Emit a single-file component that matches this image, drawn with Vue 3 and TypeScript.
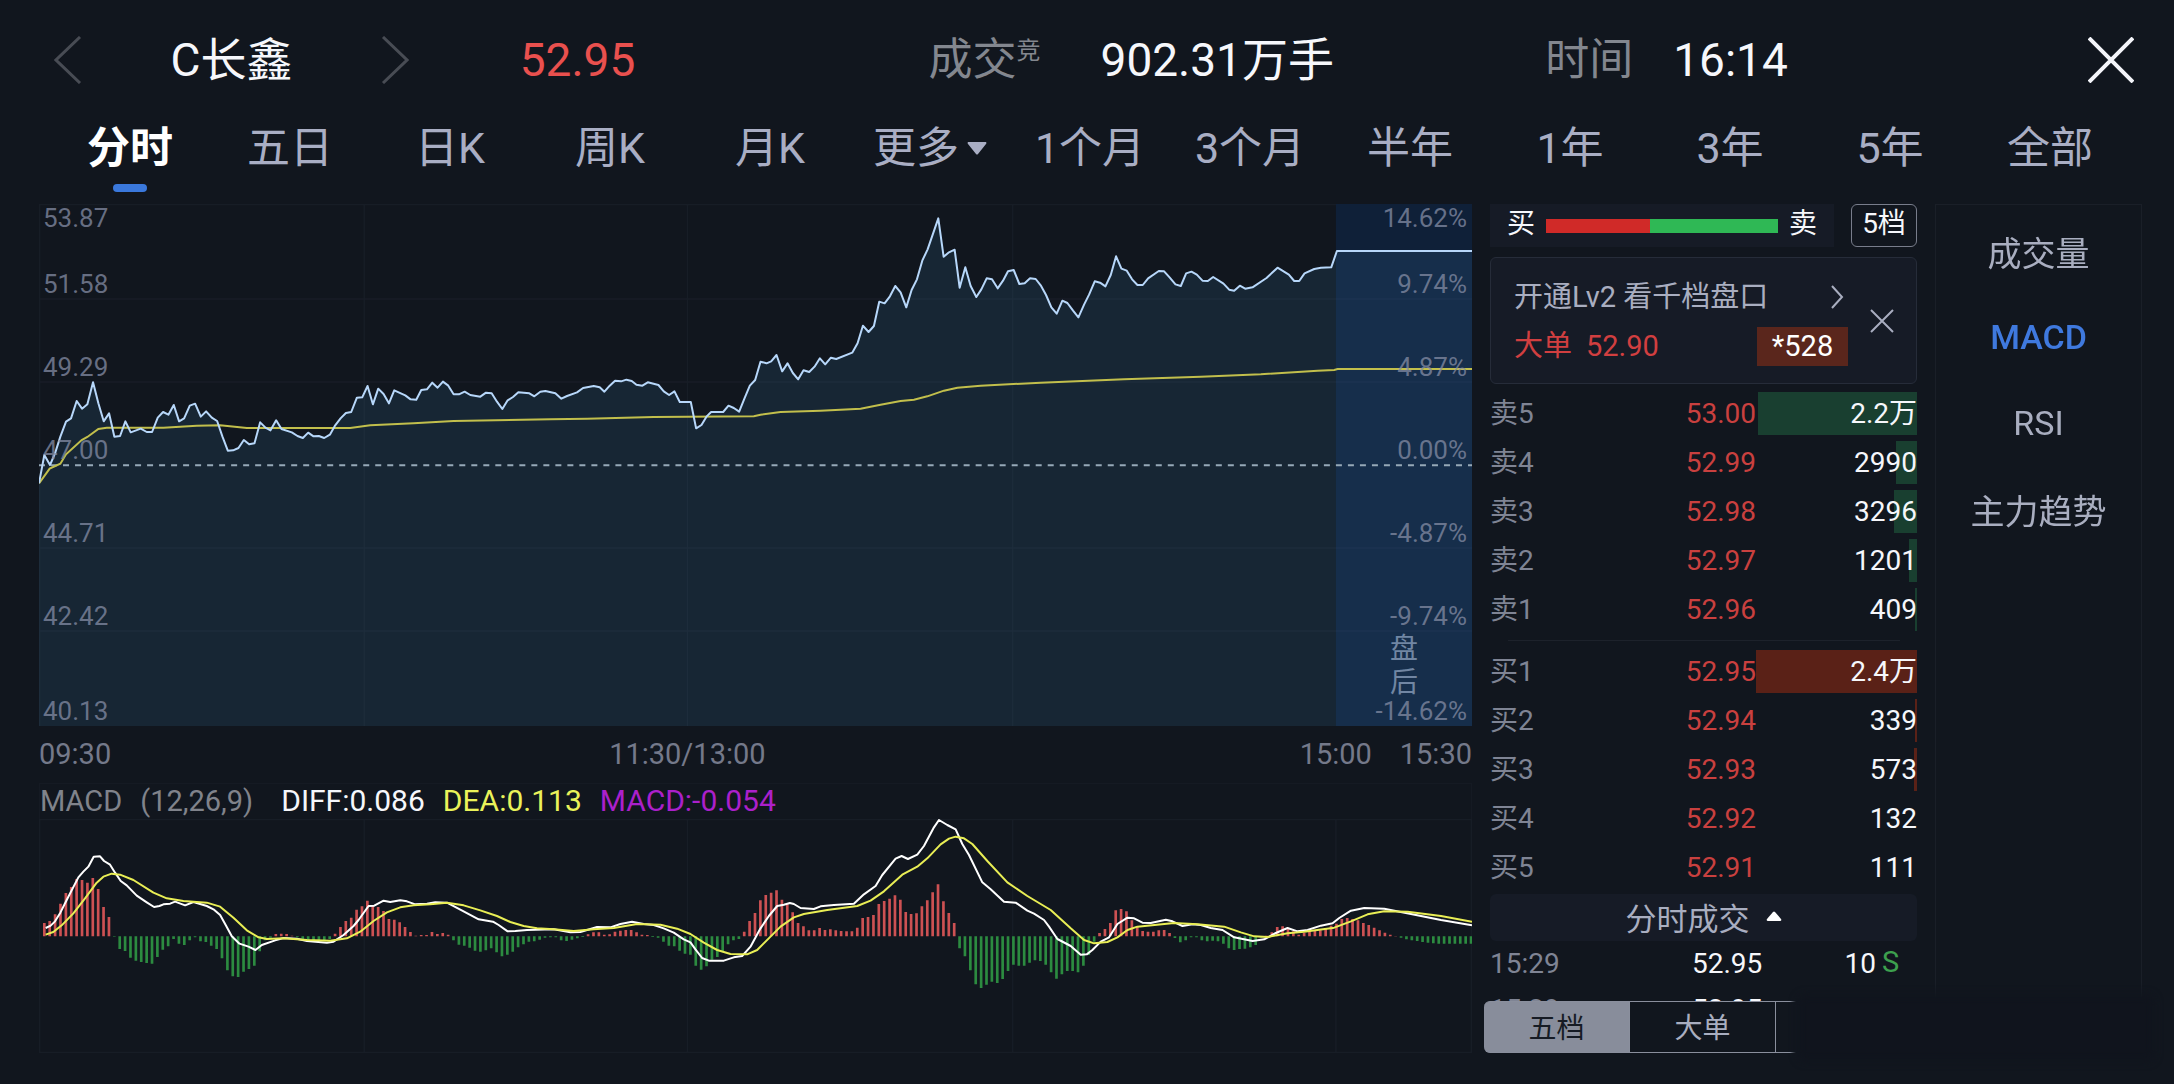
<script setup lang="ts">
import { computed, ref } from 'vue'

interface Level {
  name: string
  price: string
  volume: string
  depth: number
}

const periods = ['分时', '五日', '日K', '周K', '月K', '更多', '1个月', '3个月', '半年', '1年', '3年', '5年', '全部']
const activePeriod = ref('分时')

const indicators = ['成交量', 'MACD', 'RSI', '主力趋势']
const activeIndicator = ref('MACD')

const priceLabels = ['53.87', '51.58', '49.29', '47.00', '44.71', '42.42', '40.13']
const percentLabels = ['14.62%', '9.74%', '4.87%', '0.00%', '-4.87%', '-9.74%', '-14.62%']
const timeLabels = ['09:30', '11:30/13:00', '', '15:00', '15:30']

const asks: Level[] = [
  { name: '卖5', price: '53.00', volume: '2.2万', depth: 99 },
  { name: '卖4', price: '52.99', volume: '2990', depth: 13 },
  { name: '卖3', price: '52.98', volume: '3296', depth: 14 },
  { name: '卖2', price: '52.97', volume: '1201', depth: 5 },
  { name: '卖1', price: '52.96', volume: '409', depth: 1 },
]
const bids: Level[] = [
  { name: '买1', price: '52.95', volume: '2.4万', depth: 100 },
  { name: '买2', price: '52.94', volume: '339', depth: 1 },
  { name: '买3', price: '52.93', volume: '573', depth: 2 },
  { name: '买4', price: '52.92', volume: '132', depth: 0 },
  { name: '买5', price: '52.91', volume: '111', depth: 0 },
]
const trades = [
  { time: '15:29', price: '52.95', amount: '10', side: 'S' },
  { time: '15:29', price: '52.95', amount: '', side: '' },
]

// Both plots use a 4296-unit wide canvas; the vertical axis grows downwards.
const price =
  '0,838 16,753 33,783 48,748 64,698 81,653 96,643 113,591 129,614 145,601 162,535 178,598 194,652 210,628 226,698 243,696 259,652 275,685 305,674 323,684 339,684 356,641 372,624 388,632 404,603 420,652 435,643 452,605 468,599 485,638 501,622 518,641 534,651 550,698 566,740 582,739 598,732 614,708 630,721 646,718 663,655 679,671 694,679 711,649 727,675 758,685 775,696 791,702 807,686 823,697 839,696 855,702 872,692 888,664 904,643 920,627 936,624 953,581 969,580 985,546 1001,601 1017,554 1033,570 1049,598 1065,559 1098,574 1114,586 1131,587 1146,558 1163,556 1179,536 1195,551 1211,533 1227,545 1243,571 1259,571 1276,563 1293,573 1323,578 1340,566 1357,568 1373,593 1389,615 1405,589 1421,579 1437,565 1470,568 1485,577 1503,563 1518,561 1548,568 1566,584 1583,576 1613,565 1631,552 1663,546 1681,550 1695,563 1711,545 1727,530 1745,532 1761,527 1777,531 1791,542 1809,545 1825,535 1857,543 1873,562 1889,573 1905,562 1921,594 1954,594 1970,673 1986,663 2001,638 2015,624 2051,624 2067,605 2083,612 2099,623 2115,583 2131,545 2147,528 2163,473 2181,478 2195,472 2211,453 2228,502 2244,478 2260,507 2276,526 2292,499 2309,504 2325,488 2341,463 2357,481 2374,461 2390,465 2438,446 2454,418 2470,365 2487,384 2503,366 2519,293 2535,298 2551,277 2567,246 2583,265 2600,310 2616,258 2632,226 2648,170 2664,136 2696,43 2712,158 2728,145 2745,137 2760,251 2777,190 2793,246 2810,279 2825,256 2841,223 2857,226 2874,253 2890,230 2905,202 2922,198 2939,240 2955,238 2971,223 2988,225 3003,244 3019,273 3035,310 3051,329 3068,290 3083,297 3100,320 3116,340 3133,302 3148,272 3165,232 3181,236 3197,247 3213,213 3229,157 3245,194 3261,200 3277,226 3293,243 3309,243 3325,223 3357,201 3373,202 3390,221 3407,241 3423,246 3439,208 3455,203 3471,212 3488,230 3504,231 3520,219 3551,239 3568,257 3583,260 3600,245 3616,254 3638,250 3680,222 3713,191 3747,212 3763,231 3778,231 3794,208 3823,195 3843,191 3874,190 3891,141 4296,141'
const average =
  '0,838 32,794 64,779 81,751 128,708 145,699 178,675 203,671 373,671 473,665 543,664 623,672 933,672 993,664 1123,658 1243,651 1533,646 1643,644 1843,639 2143,637 2163,632 2223,624 2343,620 2463,614 2523,602 2583,591 2623,587 2663,577 2713,560 2753,551 2823,545 3003,536 3253,526 3483,518 3663,511 3833,500 3883,498 3893,495 4296,495'
const diff =
  '20,327 35,320 48,307 64,281 83,243 118,175 133,158 148,143 164,113 183,112 195,126 213,137 228,161 245,186 263,199 293,230 323,250 345,264 361,261 373,256 393,254 408,248 438,259 463,249 503,261 523,271 543,288 558,315 578,352 601,374 628,383 649,393 668,378 708,364 733,357 773,359 803,366 863,371 883,368 913,348 943,321 958,303 988,261 1005,260 1033,245 1053,249 1083,244 1103,247 1128,256 1163,254 1188,250 1223,251 1263,272 1318,301 1361,308 1378,318 1405,337 1428,336 1463,333 1543,331 1593,340 1623,339 1673,324 1713,325 1743,315 1778,308 1813,315 1843,318 1873,328 1903,341 1933,361 1953,370 1968,391 1988,417 2008,425 2053,425 2083,415 2108,411 2133,383 2163,328 2188,291 2213,261 2233,257 2251,252 2263,255 2283,267 2323,270 2343,262 2383,258 2443,254 2473,226 2508,201 2528,168 2568,119 2586,111 2605,120 2633,107 2653,81 2683,25 2698,3 2723,18 2748,31 2768,75 2788,108 2828,190 2853,211 2893,248 2928,251 2963,275 2983,284 3013,303 3028,323 3053,360 3093,381 3123,407 3141,406 3158,393 3183,368 3208,355 3233,315 3263,296 3283,298 3308,311 3333,312 3378,302 3398,307 3428,321 3458,316 3483,318 3513,327 3548,333 3583,355 3638,366 3673,361 3708,342 3743,327 3773,337 3803,333 3843,320 3878,313 3898,297 3933,275 3973,267 4033,269 4113,285 4203,303 4296,319'
const dea =
  '20,347 43,339 68,319 103,283 138,238 173,191 193,173 218,164 243,167 283,183 343,221 383,238 433,246 503,251 543,263 583,296 623,334 658,355 683,360 733,358 803,363 873,365 923,358 963,338 1003,306 1043,280 1083,265 1123,259 1173,256 1223,251 1273,259 1323,274 1373,291 1413,309 1453,321 1493,328 1543,331 1603,336 1663,331 1723,327 1793,315 1863,317 1913,329 1953,345 1993,371 2033,393 2073,405 2123,406 2153,393 2193,353 2223,323 2263,295 2293,285 2363,273 2453,261 2493,245 2533,217 2588,167 2633,143 2663,118 2703,76 2728,59 2748,53 2773,58 2798,75 2843,126 2903,190 2963,231 2983,243 3033,273 3093,328 3133,363 3163,373 3203,369 3233,355 3263,333 3293,323 3403,312 3473,316 3553,323 3603,340 3643,352 3683,354 3743,343 3793,338 3883,326 3933,307 3983,286 4033,277 4103,278 4203,291 4296,308'

const histogram = [
  40, 46, 66, 98, 130, 148, 172, 169, 161, 175,
  142, 88, 58, -1, -38, -44, -64, -73, -77, -80,
  -82, -62, -40, -30, -8, -22, -26, -12, -3, -15,
  -17, -28, -38, -66, -102, -120, -122, -106, -98, -88,
  -45, -12, -4, 7, 8, 7, 2, -3, -12, -14,
  -14, -13, -12, -8, 8, 28, 46, 56, 80, 90,
  107, 92, 88, 76, 52, 50, 42, 28, 13, 2,
  4, 4, 13, 7, 10, 5, -12, -25, -28, -34,
  -43, -46, -42, -36, -48, -60, -55, -46, -33, -24,
  -16, -15, -10, -4, -3, -3, -12, -14, -10, -6,
  -2, 6, 12, 12, 5, 6, 14, 17, 19, 19,
  12, 5, 4, -2, -4, -16, -28, -30, -43, -52,
  -55, -88, -100, -90, -70, -62, -46, -24, -12, -8,
  14, 46, 70, 108, 124, 131, 138, 110, 96, 72,
  40, 30, 18, 18, 25, 19, 21, 18, 16, 15,
  15, 26, 55, 58, 64, 97, 106, 113, 123, 110,
  73, 67, 69, 90, 108, 132, 156, 105, 70, 40,
  -36, -60, -102, -144, -155, -145, -136, -140, -128, -104,
  -85, -88, -88, -79, -72, -74, -85, -108, -127, -114,
  -104, -104, -108, -88, -56, -16, 10, 22, 40, 78,
  82, 75, 48, 30, 16, 14, 14, 18, 19, 10,
  -5, -18, -12, -3, -3, -12, -15, -13, -15, -22,
  -36, -41, -38, -37, -33, -26, -4, 2, 12, 28,
  30, 22, 15, 5, 10, 16, 16, 18, 24, 32,
  38, 52, 55, 52, 48, 40, 34, 26, 18, 11,
  5, 1, -4, -9, -12, -14, -17, -19, -21, -22,
  -22, -22, -22, -22, -22, -22,
]
const ZERO = 352
const STEP = 16.14

const barPath = (sign: number) =>
  histogram
    .map((v, i) => (v * sign > 0 ? `M${(16 + i * STEP).toFixed(1)} ${ZERO}v${-v}` : ''))
    .join('')
const risingBars = computed(() => barPath(1))
const fallingBars = computed(() => barPath(-1))
const areaPath = computed(() => `M${price.replace(/ /g, 'L')}V1566H0Z`)
</script>

<template>
  <div class="page">
    <header class="quote">
      <div class="stock">
        <button class="icon" aria-label="上一个">
          <svg width="28" height="48" viewBox="0 0 28 48"><path d="M26 1 2 24l24 23" fill="none" stroke="#484c54" stroke-width="3" /></svg>
        </button>
        <h1>C长鑫</h1>
        <button class="icon" aria-label="下一个">
          <svg width="28" height="48" viewBox="0 0 28 48"><path d="m2 1 24 23L2 47" fill="none" stroke="#484c54" stroke-width="3" /></svg>
        </button>
      </div>
      <div class="last">52.95</div>
      <div class="pair volume"><span class="key">成交<sup>竞</sup></span><span>902.31万手</span></div>
      <div class="pair"><span class="key">时间</span><span>16:14</span></div>
      <button class="icon" aria-label="关闭">
        <svg width="46" height="46" viewBox="0 0 46 46"><path d="m1 1 44 44M45 1 1 45" stroke="#f4f5fa" stroke-width="4" /></svg>
      </button>
    </header>

    <nav class="periods">
      <button v-for="p in periods" :key="p" :class="{ active: p === activePeriod }" @click="activePeriod = p">
        {{ p }}<svg v-if="p === '更多'" width="20" height="14" viewBox="0 0 20 14"><path d="M1 1h18q1 1 0 2l-8 10q-1 1-2 0L1 3Q0 2 1 1Z" fill="#a9aec4" /></svg>
      </button>
    </nav>

    <main>
      <section class="charts">
        <div class="plot">
          <svg class="canvas price-canvas" viewBox="0 0 4296 1566" preserveAspectRatio="none">
            <rect x="3888" width="408" height="1566" fill="#0f2038" />
            <path :d="areaPath" fill="#172634" />
            <path d="M3888 150 3891 141H4296V1566H3888Z" fill="#162e4b" />
            <path class="grid" d="M0 2H3888M0 285H4296M0 534H4296M0 1032H4296M0 1281H4296M2 0V1566M975 0V1566M1944 0V1566M2919 0V1566" />
            <path d="M0 784H4296" stroke="#96a9b8" stroke-width="6" stroke-dasharray="18" />
            <polyline :points="average" fill="none" stroke="#c2bf4c" stroke-width="6" />
            <polyline :points="price" fill="none" stroke="#b7d7fa" stroke-width="6" stroke-linejoin="round" />
          </svg>
          <div class="axis"><span v-for="l in priceLabels" :key="l">{{ l }}</span></div>
          <div class="axis right"><span v-for="l in percentLabels" :key="l">{{ l }}</span></div>
          <div class="after">盘<br />后</div>
        </div>
        <div class="times"><span v-for="(t, i) in timeLabels" :key="i">{{ t }}</span></div>
        <div class="legend">
          <span class="muted">MACD</span><span class="muted">(12,26,9)</span>
          <span class="diff">DIFF:0.086</span><span class="dea">DEA:0.113</span><span class="macd">MACD:-0.054</span>
        </div>
        <svg class="canvas macd-canvas" viewBox="0 0 4296 702" preserveAspectRatio="none">
          <path class="grid" d="M0 2H4296M0 700H4296M2 0V702M975 0V702M1944 0V702M2919 0V702M3888 0V702M4294 0V702" />
          <path :d="risingBars" stroke="#cd5153" stroke-width="8" />
          <path :d="fallingBars" stroke="#2c8b40" stroke-width="8" />
          <polyline :points="diff" fill="none" stroke="#fff" stroke-width="6" stroke-linejoin="round" />
          <polyline :points="dea" fill="none" stroke="#e9ee55" stroke-width="6" stroke-linejoin="round" />
        </svg>
      </section>

      <section class="book">
        <div class="ratio-row">
          <div class="ratio"><span>买</span><i class="ratio-bar"></i><span>卖</span></div>
          <button class="depth">5档</button>
        </div>

        <div class="promo">
          <div class="promo-body">
            <a href="#">开通Lv2 看千档盘口
              <svg width="14" height="24" viewBox="0 0 14 24"><path d="m2 1 10 11L2 23" fill="none" stroke="#a9aec0" stroke-width="2" /></svg>
            </a>
            <div class="big"><span>大单</span><span>52.90</span><b>*528</b></div>
          </div>
          <button class="icon" aria-label="关闭提示">
            <svg width="24" height="24" viewBox="0 0 24 24"><path d="m1 1 22 22M23 1 1 23" stroke="#a9aec0" stroke-width="2" /></svg>
          </button>
        </div>

        <table class="levels asks">
          <tbody>
            <tr v-for="l in asks" :key="l.name">
              <th scope="row">{{ l.name }}</th>
              <td class="price">{{ l.price }}</td>
              <td class="vol"><i :style="{ width: l.depth + '%' }"></i><span>{{ l.volume }}</span></td>
            </tr>
          </tbody>
        </table>
        <hr />
        <table class="levels bids">
          <tbody>
            <tr v-for="l in bids" :key="l.name">
              <th scope="row">{{ l.name }}</th>
              <td class="price">{{ l.price }}</td>
              <td class="vol"><i :style="{ width: l.depth + '%' }"></i><span>{{ l.volume }}</span></td>
            </tr>
          </tbody>
        </table>

        <button class="trades-toggle">
          分时成交
          <svg width="16" height="10" viewBox="0 0 16 10"><path d="M7 1q1-1 2 0l6 7q1 2-1 2H2Q0 10 1 8Z" fill="#fff" /></svg>
        </button>
        <div class="trades">
          <div v-for="(t, i) in trades" :key="i" class="trade">
            <span class="time">{{ t.time }}</span><span>{{ t.price }}</span>
            <span class="amount">{{ t.amount }}</span><span class="side">{{ t.side }}</span>
          </div>
        </div>
        <div class="segments">
          <button class="selected">五档</button><button>大单</button><i></i>
        </div>
      </section>

      <aside>
        <button v-for="n in indicators" :key="n" :class="{ active: n === activeIndicator }" @click="activeIndicator = n">{{ n }}</button>
      </aside>
    </main>
  </div>
</template>

<style>
body {
  background: #11161e;
}
</style>

<style scoped>
.page {
  min-height: 100vh;
  box-sizing: border-box;
  padding-bottom: 31px;
  background: #11161e;
  color: #f6f7fb;
  font-family: Roboto, 'Noto Sans CJK SC', sans-serif;
  font-size: 28px;
  overflow: hidden;
}
button {
  padding: 0;
  border: 0;
  background: none;
  color: inherit;
  font: inherit;
}
svg {
  display: block;
  flex: none;
}

.quote {
  display: grid;
  grid-template-columns: 466fr 409fr 617fr 543fr 46px;
  align-items: center;
  box-sizing: border-box;
  height: 118px;
  padding: 2px 40px 0 54px;
  font-size: 46px;
  line-height: 60px;
  white-space: nowrap;
}
.stock {
  display: flex;
  align-items: center;
  justify-content: space-between;
  width: 355px;
}
h1 {
  margin: 0;
  font-size: 46px;
  font-weight: 400;
}
.last {
  color: #e9504e;
}
.pair {
  display: flex;
  gap: 40px;
}
.volume {
  gap: 60px;
}
.key {
  color: #83878f;
  font-size: 44px;
}
sup {
  position: relative;
  top: -16px;
  font-size: 24px;
  line-height: 24px;
  vertical-align: baseline;
}

.periods {
  display: grid;
  grid-template-columns: repeat(13, 1fr);
  margin-bottom: 12px;
  padding: 0 44px 0 50px;
}
.periods button {
  position: relative;
  display: flex;
  justify-content: center;
  align-items: center;
  gap: 8px;
  padding-bottom: 14px;
  color: #a9aec4;
  font-size: 43px;
  line-height: 60px;
  white-space: nowrap;
}
.periods .active {
  color: #fff;
  font-weight: 700;
}
.periods .active::after {
  content: '';
  position: absolute;
  bottom: 0;
  width: 34px;
  height: 8px;
  border-radius: 4px;
  background: #3a78dc;
}

main {
  display: grid;
  grid-template-columns: 1fr 427px 207px;
  column-gap: 18px;
  padding: 0 32px 0 39px;
}
.plot {
  position: relative;
}
.canvas {
  width: 100%;
}
.price-canvas {
  height: 522px;
}
.macd-canvas {
  height: 234px;
}
.grid {
  fill: none;
  stroke: #78849a;
  stroke-opacity: 0.07;
  stroke-width: 4;
}
.axis {
  position: absolute;
  inset: -4px auto 4px 4px;
  display: grid;
  grid-template-rows: 29fr 66fr 83fr 83fr 83fr 83fr 95fr;
  align-items: end;
  color: rgba(132, 140, 164, 0.75);
  font-size: 26px;
  line-height: 22px;
}
.axis.right {
  inset: -4px 5px 4px auto;
  text-align: right;
}
.after {
  position: absolute;
  right: 0;
  bottom: 26px;
  width: 136px;
  color: #7186a3;
  line-height: 34px;
  text-align: center;
}
.times {
  display: grid;
  grid-template-columns: 324fr 648fr 260fr 128fr 72fr;
  color: #74798a;
  font-size: 29px;
  line-height: 57px;
  text-align: center;
  white-space: nowrap;
}
.times span:first-child {
  text-align: left;
}
.legend {
  display: flex;
  gap: 18px;
  box-sizing: border-box;
  height: 36px;
  border: solid #151a23;
  border-width: 1px 1px 0;
  font-size: 30px;
  line-height: 34px;
  white-space: nowrap;
}
.muted {
  color: #80838b;
  font-size: 29px;
}
.diff {
  margin-left: 10px;
}
.dea {
  color: #eaf25a;
}
.macd {
  color: #ab20cb;
}

.book {
  display: flex;
  flex-direction: column;
}
.ratio-row {
  display: flex;
  gap: 17px;
  height: 43px;
  line-height: 38px;
}
.ratio {
  flex: 1;
  display: flex;
  align-items: center;
  gap: 11px;
  padding: 0 17px;
  background: #161b26;
}
.ratio span {
  padding-bottom: 4px;
}
.ratio-bar {
  flex: 1;
  height: 14px;
  background: linear-gradient(90deg, #d02a28 45%, #2fb855 45%);
}
.depth {
  box-sizing: border-box;
  width: 66px;
  padding-bottom: 3px;
  border: 1px solid #787d8b;
  border-radius: 6px;
}
.promo {
  display: flex;
  align-items: center;
  justify-content: space-between;
  box-sizing: border-box;
  height: 127px;
  margin: 10px 0 5px;
  padding: 0 22px 0 23px;
  border: 1px solid #262c39;
  border-radius: 6px;
  background: #161b26;
  font-size: 29px;
}
.promo-body {
  width: 334px;
}
.promo a {
  display: flex;
  align-items: center;
  justify-content: space-between;
  padding-right: 4px;
  color: #a9aec0;
  line-height: 50px;
  text-decoration: none;
}
.big {
  display: flex;
  align-items: center;
  gap: 14px;
  margin: 5px 0 3px;
  color: #d13f40;
  line-height: 39px;
}
.big b {
  width: 91px;
  margin-left: auto;
  background: #5a261c;
  color: #fff;
  font-weight: 400;
  text-align: center;
}
.levels {
  width: 100%;
  table-layout: fixed;
  border-collapse: collapse;
}
.levels tr {
  height: 49px;
}
.levels th,
.levels td {
  padding: 0;
  line-height: 43px;
}
.levels th {
  width: 133px;
  color: #7f8494;
  font-weight: 400;
  text-align: left;
}
.price {
  width: 133px;
  color: #c9403f;
  text-align: right;
}
.vol {
  position: relative;
  text-align: right;
}
.vol i {
  position: absolute;
  right: 0;
  top: 3px;
  bottom: 3px;
}
.vol span {
  position: relative;
}
.asks i {
  background: #193f30;
}
.bids i {
  background: #5a2117;
}
hr {
  width: 392px;
  height: 1px;
  margin: 6px auto;
  border: 0;
  background: #1d222b;
}
.trades-toggle {
  display: flex;
  align-items: center;
  justify-content: center;
  gap: 16px;
  box-sizing: border-box;
  height: 47px;
  margin-top: 2px;
  padding-bottom: 3px;
  border-radius: 6px;
  background: #161b26;
  color: #a9aec0;
  font-size: 31px;
}
.trades {
  height: 60px;
  overflow: hidden;
}
.trade {
  display: grid;
  grid-template-columns: 202px 1fr 40px 41px;
  line-height: 46px;
}
.time {
  color: #7f8494;
}
.amount {
  text-align: right;
}
.side {
  padding-left: 6px;
  color: #3da04e;
  font-size: 29px;
  line-height: 42px;
}
.segments {
  position: relative;
  display: flex;
  height: 52px;
  margin-left: -6px;
}
.segments > * {
  box-sizing: border-box;
  padding-bottom: 2px;
  border: 1px solid #8a8f9d;
  border-left: 0;
}
.segments button {
  width: 146px;
  color: #a9aec0;
}
.segments .selected {
  border-radius: 6px 0 0 6px;
  background: #888d9b;
  color: #161b24;
}
.segments i {
  width: 20px;
  border-right: 0;
  mask-image: linear-gradient(90deg, #000 70%, transparent);
}
.segments::after {
  content: '';
  position: absolute;
  top: -6px;
  left: 314px;
  width: 356px;
  height: 66px;
  border-radius: 8px;
  background: #10141d;
  filter: blur(4px);
}

aside {
  display: flex;
  flex-direction: column;
  box-sizing: border-box;
  padding-top: 3px;
  border: solid #1a1f28;
  border-width: 1px 1px 0;
  mask-image: linear-gradient(#000 calc(100% - 70px), transparent calc(100% - 54px));
}
aside button {
  height: 86px;
  color: #a9aec0;
  font-size: 34px;
}
aside .active {
  color: #3f79de;
  font-weight: 500;
}
</style>
